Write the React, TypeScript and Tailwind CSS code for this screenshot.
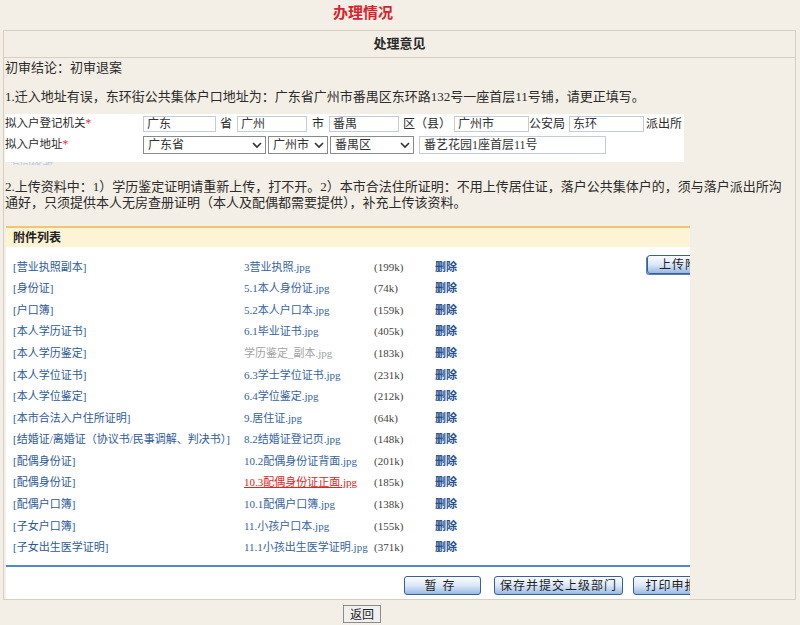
import React from "react";

const rows: { name: string; file: string; size: string; kind?: "grey" | "red" }[] = [
  { name: "[营业执照副本]", file: "3营业执照.jpg", size: "(199k)" },
  { name: "[身份证]", file: "5.1本人身份证.jpg", size: "(74k)" },
  { name: "[户口簿]", file: "5.2本人户口本.jpg", size: "(159k)" },
  { name: "[本人学历证书]", file: "6.1毕业证书.jpg", size: "(405k)" },
  { name: "[本人学历鉴定]", file: "学历鉴定_副本.jpg", size: "(183k)", kind: "grey" },
  { name: "[本人学位证书]", file: "6.3学士学位证书.jpg", size: "(231k)" },
  { name: "[本人学位鉴定]", file: "6.4学位鉴定.jpg", size: "(212k)" },
  { name: "[本市合法入户住所证明]", file: "9.居住证.jpg", size: "(64k)" },
  { name: "[结婚证/离婚证（协议书/民事调解、判决书）]", file: "8.2结婚证登记页.jpg", size: "(148k)" },
  { name: "[配偶身份证]", file: "10.2配偶身份证背面.jpg", size: "(201k)" },
  { name: "[配偶身份证]", file: "10.3配偶身份证正面.jpg", size: "(185k)", kind: "red" },
  { name: "[配偶户口簿]", file: "10.1配偶户口簿.jpg", size: "(138k)" },
  { name: "[子女户口簿]", file: "11.小孩户口本.jpg", size: "(155k)" },
  { name: "[子女出生医学证明]", file: "11.1小孩出生医学证明.jpg", size: "(371k)" },
];

function Chevron() {
  return (
    <svg width="12" height="10" viewBox="0 0 12 10" className="shrink-0">
      <path d="M2 3 L6 7 L10 3" fill="none" stroke="#333" strokeWidth="1.6" />
    </svg>
  );
}

function Select({ text, w }: { text: string; w: string }) {
  return (
    <div className={`${w} h-[18px] bg-white border border-[#8a8a8a] flex items-center justify-between pl-[4px] pr-[2px] text-[12px] text-[#333] shrink-0`}>
      <span>{text}</span>
      <Chevron />
    </div>
  );
}

function Input({ text, w }: { text: string; w: string }) {
  return (
    <div className={`${w} h-[16px] bg-white border border-[#c4ccd6] flex items-center pl-[3px] text-[12px] text-[#333] shrink-0`}>
      {text}
    </div>
  );
}

function Btn({ children, cls }: { children: React.ReactNode; cls: string }) {
  return (
    <div
      className={`${cls} h-[19px] flex items-center justify-center rounded-[3px] border border-[#37609b] bg-linear-to-b from-[#fbfdff] via-[#dce8f7] to-[#98b9e4] text-[12px] text-[#1e1e1e] shrink-0 whitespace-nowrap`}
    >
      {children}
    </div>
  );
}

export default function App() {
  return (
    <div className="w-[800px] h-[625px] overflow-hidden bg-[#f4efe6] text-[#2b2b2b] font-['Liberation_Serif','Noto_Sans_CJK_SC',serif]">
      <div className="h-[30px] flex items-center justify-center pr-[74px] pb-[5px] text-[15px] font-bold text-[#d6232e] font-['Noto_Sans_CJK_SC',sans-serif]">
        办理情况
      </div>
      <div className="ml-[3px] w-[793px] border border-[#d6d0c4]">
        <div className="h-[27px] border-b border-[#d6d0c4] flex items-center justify-center text-[13px] font-bold">
          处理意见
        </div>
        <div className="pl-[1px]">
          <div className="h-[19px] leading-[19px] text-[13px] whitespace-nowrap">初审结论：初审退案</div>
          <div className="mt-[10px] h-[20px] leading-[20px] text-[13px] whitespace-nowrap">
            1.迁入地址有误，东环街公共集体户口地址为：广东省广州市番禺区东环路132号一座首层11号铺，请更正填写。
          </div>
          <div className="mt-[7px] w-[679px] bg-white pt-[2px] pb-[8px]">
            <div className="flex items-center h-[16px] text-[11.5px] whitespace-nowrap">
              <div className="w-[138px] shrink-0">
                拟入户登记机关<span className="text-[#f0283c]">*</span>
              </div>
              <Input text="广东" w="w-[73px]" />
              <span className="ml-[4px] w-[12px] text-[12px]">省</span>
              <div className="ml-[5px]"><Input text="广州" w="w-[70px]" /></div>
              <span className="ml-[5px] w-[12px] text-[12px]">市</span>
              <div className="ml-[5px]"><Input text="番禺" w="w-[70px]" /></div>
              <span className="ml-[4px] w-[48px] text-[12px]">区（县）</span>
              <div className="ml-[3px]"><Input text="广州市" w="w-[75px]" /></div>
              <span className="w-[36px] text-[12px]">公安局</span>
              <div className="ml-[4px]"><Input text="东环" w="w-[75px]" /></div>
              <span className="ml-[2px] text-[12px]">派出所</span>
            </div>
            <div className="flex items-center h-[18px] mt-[4px] text-[11.5px] whitespace-nowrap">
              <div className="w-[138px] shrink-0">
                拟入户地址<span className="text-[#f0283c]">*</span>
              </div>
              <Select text="广东省" w="w-[123px]" />
              <div className="ml-[2px]"><Select text="广州市" w="w-[60px]" /></div>
              <div className="ml-[2px]"><Select text="番禺区" w="w-[84px]" /></div>
              <div className="ml-[5px] w-[187px] h-[18px] bg-white border border-[#c4ccd6] flex items-center pl-[4px] text-[12px] text-[#333]">
                番艺花园1座首层11号
              </div>
            </div>
          </div>
          <div className="h-[3px] overflow-hidden">
            <div className="leading-[9px] text-[11px] text-[#b7cde8] pl-[4px]">返回修改</div>
          </div>
          <div className="mt-[14px] text-[13px] leading-[16px] whitespace-nowrap">
            2.上传资料中：1）学历鉴定证明请重新上传，打不开。2）本市合法住所证明：不用上传居住证，落户公共集体户的，须与落户派出所沟
            <br />
            通好，只须提供本人无房查册证明（本人及配偶都需要提供），补充上传该资料。
          </div>
          <div className="mt-[15px] ml-[1px] w-[684px] overflow-hidden">
            <div className="border-t-2 border-[#f1c66e] h-[21px] bg-[#fdf3d5] pl-[7px] flex items-center text-[12px] font-bold text-[#222]">
              附件列表
            </div>
            <div className="relative bg-white pt-[9px] pb-[7px]">
              <div className="absolute left-[641px] top-[8px]">
                <Btn cls="w-[76px] h-[17px] shadow-[-1px_1px_0_#5a7fb5] tracking-[1px]">上传附件</Btn>
              </div>
              {rows.map((r, i) => (
                <div key={i} className="h-[21.6px] flex items-center text-[11px] whitespace-nowrap">
                  <div className="w-[238px] pl-[7px] shrink-0 text-[#2d5a98]">{r.name}</div>
                  <div
                    className={`w-[130px] shrink-0 ${
                      r.kind === "grey"
                        ? "text-[#a3a3a3]"
                        : r.kind === "red"
                        ? "text-[#e2231a] underline"
                        : "text-[#36639f]"
                    }`}
                  >
                    {r.file}
                  </div>
                  <div className="w-[61px] shrink-0 text-[#444]">{r.size}</div>
                  <div className="font-bold text-[#24508e]">删除</div>
                </div>
              ))}
            </div>
            <div className="h-[2px] bg-[#4b8bc9]" />
            <div className="h-[32px] bg-white flex items-start pt-[9px] pl-[398px]">
              <Btn cls="w-[77px] tracking-[6px]">暂存</Btn>
              <Btn cls="ml-[13px] w-[129px] tracking-[1px]">保存并提交上级部门</Btn>
              <Btn cls="ml-[10px] w-[90px] tracking-[1px]">打印申报表</Btn>
            </div>
          </div>
        </div>
      </div>
      <div className="mt-[5px] ml-[343px] w-[38px] h-[18px] border border-[#8c8c8c] bg-[#f0f0f0] flex items-center justify-center text-[12px] text-[#222] font-['Noto_Sans_CJK_SC',sans-serif]">
        返回
      </div>
    </div>
  );
}
